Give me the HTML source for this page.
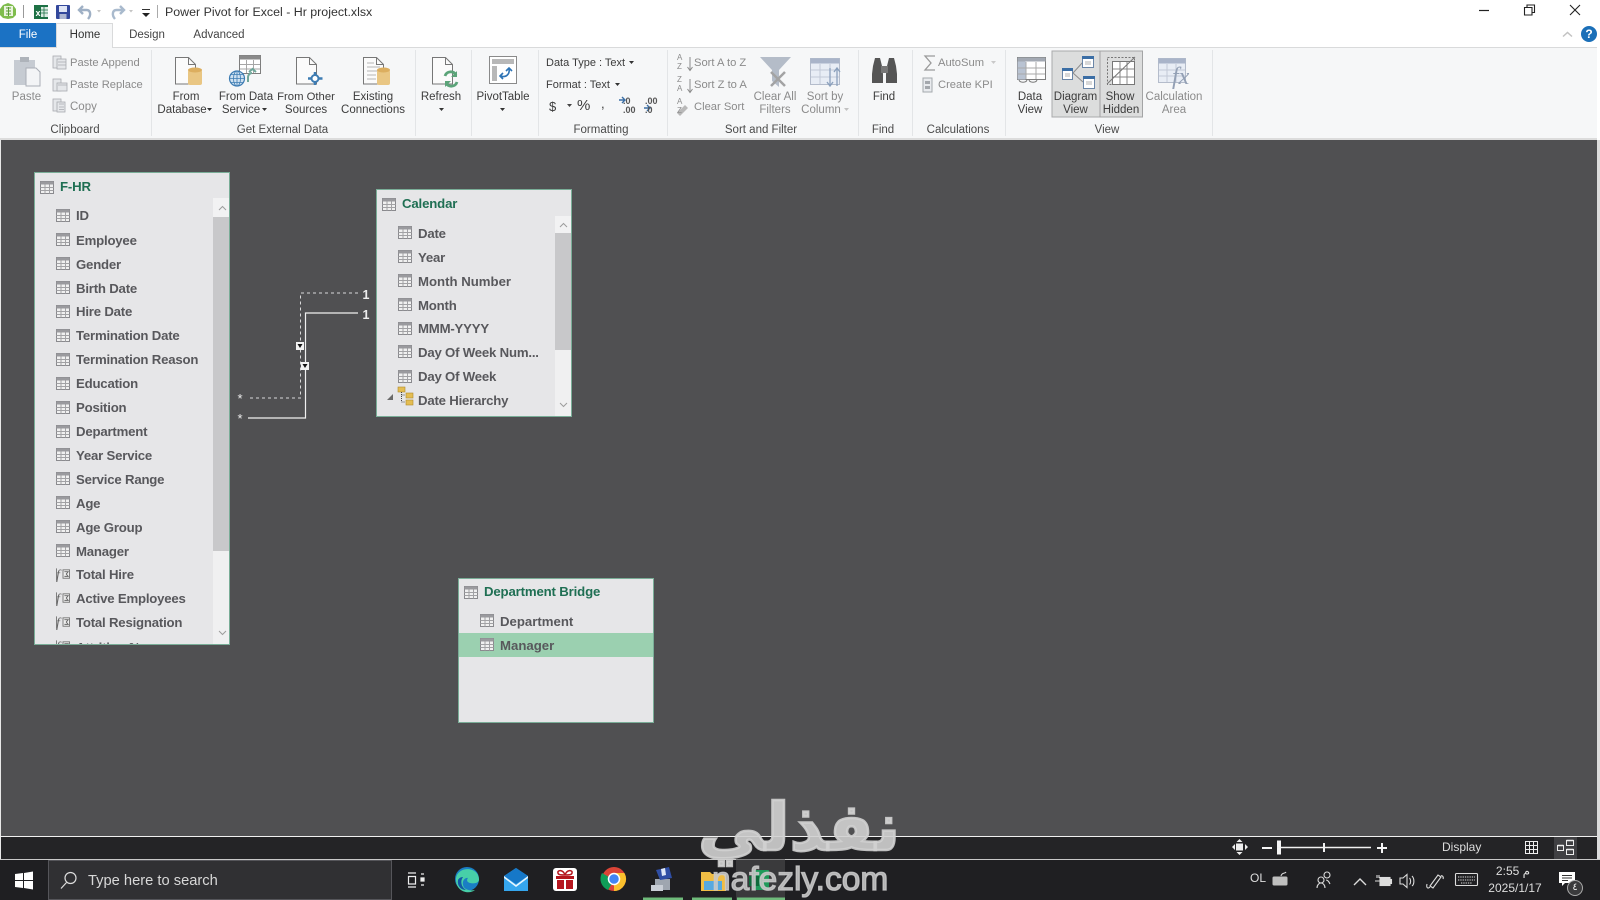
<!DOCTYPE html>
<html lang="en"><head><meta charset="utf-8"><title>Power Pivot for Excel - Hr project.xlsx</title>
<style>
html,body{margin:0;padding:0;width:1600px;height:900px;overflow:hidden;background:#fff}
#w{position:relative;width:1600px;height:900px;overflow:hidden;background:#fff;font-family:"Liberation Sans","DejaVu Sans",sans-serif;filter:blur(.3px)}
.a{position:absolute}
.t{position:absolute;white-space:nowrap;font-size:11.5px;line-height:14px;color:#3c3c3c}
.c{transform:translateX(-50%)}
.d{color:#8b8b8b}
.g{color:#4a4a4a}
.tb{position:absolute;background:#e6e6e8;border:1px solid #79ad97;box-sizing:border-box;overflow:hidden}
.h{position:absolute;font-weight:bold;font-size:13.2px;line-height:16px;color:#1f6f53;letter-spacing:-.15px;white-space:nowrap}
.r{position:absolute;font-weight:bold;font-size:13.2px;line-height:16px;color:#58585c;letter-spacing:-.2px;white-space:nowrap}
.i{position:absolute;width:14px;height:13px}
svg{position:absolute;left:0;top:0;overflow:visible}
</style></head><body><div id="w">

<svg width="0" height="0" style="position:absolute"><defs>
<symbol id="gr" viewBox="0 0 14 13"><rect x=".5" y=".5" width="13" height="12" fill="#f0f0f0" stroke="#8a8a8e"/><rect x=".5" y=".5" width="13" height="3" fill="#9a9a9e"/><path d="M.5 6.5h13M.5 9.5h13M5 3.5v9M9.5 3.5v9" stroke="#a2a2a5" fill="none"/></symbol>
<symbol id="fx" viewBox="0 0 15 13" overflow="visible"><text x="0" y="11.500" font-family="Liberation Serif" font-style="italic" font-size="15" fill="#666">f</text><path d="M.5 0v13" stroke="#777"/><rect x="7.500" y="1.500" width="7" height="9" fill="#eee" stroke="#777"/><path d="M9 3.500h4l-2 2.500 2 2.500H9" stroke="#666" fill="none"/></symbol>
</defs></svg>

<!-- title bar -->
<svg width="1600" height="50">
<path d="M8 3l5 2 3 4v6l-3 3-5 1-5-1-3-3V9l3-4z" fill="#7fbd4d"/><path d="M4 6h9v10H4z" fill="#e9f3dd"/><path d="M6 8h5M6 11h5M6 14h5M8.5 7v9" stroke="#5b9b35"/>
<path d="M23.500 5v13" stroke="#999"/>
<rect x="34" y="5" width="14" height="14" fill="#1e7145"/><rect x="41" y="7" width="7" height="10" fill="#dcebe2"/><text x="35.500" y="16" font-size="9" font-weight="bold" fill="#fff" font-family="Liberation Sans">x</text><path d="M44 7v10M41 10h7M41 13h7" stroke="#1e7145" stroke-width=".8"/>
<rect x="56" y="5" width="14" height="14" rx="1" fill="#33489c"/><rect x="59" y="6" width="8" height="6" fill="#dfe5f5"/><rect x="59.500" y="14" width="7" height="5" fill="#adb6d2"/>
<path d="M83 6l-4 4 4 4M79.500 10h7c4 0 5 5 1.500 9" fill="none" stroke="#9fb0c5" stroke-width="2.400"/><path d="M97 10l4 0-2 2.500z" fill="#c4c4c4"/>
<path d="M120 6l4 4-4 4M123.500 10h-7c-4 0-5 5-1.500 9" fill="none" stroke="#a9bacd" stroke-width="2.400"/><path d="M129 10l4 0-2 2.500z" fill="#c4c4c4"/>
<path d="M142 9.500h8" stroke="#333"/><path d="M142 13l8 0-4 4z" fill="#222"/>
<path d="M157.500 5v13" stroke="#aaa"/>
<path d="M1479 10.500h10" stroke="#222" stroke-width="1.200"/>
<path d="M1527 7.500v-2.500h7.500v7.500h-2.500M1524.500 7.500h7.500v7.500h-7.500z" fill="none" stroke="#222" stroke-width="1.100"/>
<path d="M1570 5l10 10M1580 5l-10 10" stroke="#222" stroke-width="1.100"/>
<path d="M1563 36.500l4.500-4 4.500 4" fill="none" stroke="#c2c2c2" stroke-width="1.500"/>
<circle cx="1589" cy="34" r="8" fill="#1a6fb8"/>
</svg>
<div class="t" style="left:165px;top:5px;font-size:12.400px;color:#333;">Power Pivot for Excel - Hr project.xlsx</div>
<div class="t c" style="left:1589px;top:27px;font-size:12px;font-weight:bold;color:#fff">?</div>

<!-- tabs -->
<div class="a" style="left:0;top:23px;width:56px;height:24px;background:#1b72c4"></div>
<div class="t c" style="left:28px;top:28px;color:#fff">File</div>
<div class="a" style="left:0;top:46.500px;width:1597px;height:1px;background:#d9dadb"></div>
<div class="a" style="left:56px;top:23px;width:57px;height:25px;background:#f6f7f8;border:1px solid #d9dadb;border-bottom:0;box-sizing:border-box"></div>
<div class="t c" style="left:85px;top:28px;color:#333">Home</div>
<div class="t c" style="left:147px;top:28px;color:#444">Design</div>
<div class="t c" style="left:219px;top:28px;color:#444">Advanced</div>

<!-- ribbon -->
<div class="a" style="left:0;top:47.500px;width:1597px;height:90px;background:#f6f7f8"></div>
<div class="a" style="left:0;top:137.500px;width:1597px;height:2.500px;background:#dcdcdc"></div>
<svg width="1600" height="140">
<g stroke="#e3e5e7" stroke-width="1">
<path d="M151.500 50v86M415.500 50v86M471.500 50v86M538.500 50v86M667.500 50v86M858.500 50v86M912.500 50v86M1005.500 50v86M1212.500 50v86"/>
</g>
<rect x="1052" y="51" width="48" height="66" fill="#dcdddd" stroke="#a9aaab"/>
<rect x="1100" y="51" width="42.500" height="66" fill="#dcdddd" stroke="#a3a4a5"/>

<!-- paste -->
<rect x="14" y="60" width="21" height="25" fill="#c6cbd2"/><rect x="20" y="57" width="9" height="5" fill="#aeb3ba"/><path d="M26 68h10l4 4v14H26z" fill="#f3f4f6" stroke="#a9aeb6"/>
<g fill="#e5e7ea" stroke="#a8abb0" stroke-width=".8">
<rect x="53" y="56" width="8" height="12"/><rect x="57" y="59" width="9" height="10"/><rect x="53" y="79" width="8" height="12"/><rect x="57" y="83" width="10" height="8"/><rect x="53" y="99" width="8" height="12"/><rect x="57" y="102" width="8" height="10"/></g>
<path d="M58 62h8M58 65h8M58 85h9M59 104h5M59 107h5M59 109.500h5" stroke="#a8abb0" stroke-width=".8"/>

<!-- docs -->
<g fill="#fbfbfb" stroke="#777" stroke-width="1">
<path d="M175.500 57.500h13l7 7v19.500h-20z"/>
<path d="M296.500 57.500h13l7 7v19.500h-20z"/>
<path d="M363.500 57.500h13l7 7v19.500h-20z"/>
<path d="M432.500 57.500h13l7 7v19.500h-20z"/>
</g>
<path d="M188.500 57.500v7h7M309.500 57.500v7h7M376.500 57.500v7h7M445.500 57.500v7h7" fill="none" stroke="#777"/>
<path d="M367 63h7M367 67h13M367 71h13M367 75h9M367 79h9" stroke="#b5b5b5"/>
<g fill="#e9c683"><rect x="188" y="70" width="14" height="15" rx="2"/><rect x="377" y="70" width="13" height="15" rx="2"/></g>
<g fill="#dcae5f"><ellipse cx="195" cy="70" rx="7" ry="2.500"/><ellipse cx="383.500" cy="70" rx="6.500" ry="2.500"/></g>
<!-- data service -->
<rect x="239.500" y="55.500" width="21" height="18" fill="#fff" stroke="#7e7e7e"/><rect x="239.500" y="55.500" width="21" height="4" fill="#8a8a8a"/>
<path d="M246.500 60v13M253.500 60v13M240 64.500h20M240 69h20" stroke="#a6a6a6"/>
<circle cx="237" cy="78.500" r="7.500" fill="#cfe1f0" stroke="#3d7cb3" stroke-width="1.200"/><path d="M229.500 78.500h15M237 71v15M231 74.500h12M231 82.500h12" stroke="#3d7cb3" stroke-width=".8"/><ellipse cx="237" cy="78.500" rx="3.500" ry="7.500" fill="none" stroke="#3d7cb3" stroke-width=".8"/>
<path d="M248 82v-5c0-2 2-4 4-4M249 72l3.500-3 3.500 3" fill="none" stroke="#6fa79a" stroke-width="2"/>
<!-- other sources -->
<circle cx="315" cy="78.500" r="3.500" fill="#fff" stroke="#3d7cb3" stroke-width="2"/><path d="M315 72v3M315 82v3M308 78.500h3.500M319 78.500h3.500" stroke="#3d7cb3" stroke-width="2.500"/>
<!-- refresh -->
<path d="M445 76a6 6 0 0 1 11-1M457 82a6 6 0 0 1-11 1" fill="none" stroke="#5ba479" stroke-width="2.800"/><path d="M457 71v6h-6zM445 87v-6h6z" fill="#5ba479"/>
<!-- pivot -->
<rect x="489.500" y="56.500" width="27" height="27" fill="#fff" stroke="#8a8a8a"/><rect x="492" y="59" width="22" height="5" fill="#b8b8b8"/><rect x="492" y="66" width="5" height="15" fill="#b8b8b8"/>
<path d="M501 76c5 2 9-2 8-7M506 71l3-3 3 3M503 73l-3 3 3 3" fill="none" stroke="#2d73b5" stroke-width="1.600"/>
<!-- format small icons -->
<path d="M567 104l5 0-2.500 3z" fill="#444"/>
<path d="M619 100h5M622 97l3 3-3 3M644 108h5M647 105l3 3-3 3" fill="none" stroke="#3a6ea5" stroke-width="1.400"/>
<!-- sort -->
<path d="M690 57v13M687.500 67l2.500 3.500 2.500-3.500M690 79v13M687.500 89l2.500 3.500 2.500-3.500" fill="none" stroke="#8b8b8b"/>
<path d="M677 113l8-8 3 3-8 8z" fill="#b9b9b9"/>
<!-- clear -->
<path d="M760 57h31l-12 13v17l-7-6V70z" fill="#b4bcc8"/><path d="M771 72l14 14M785 72l-14 14" stroke="#a3a3a3" stroke-width="2.500"/>
<!-- sort by column -->
<rect x="810.500" y="58.500" width="29" height="26" fill="#e8edf5" stroke="#b4bccb"/><rect x="810.500" y="58.500" width="29" height="5" fill="#a9b4c9"/><path d="M820 64v20M830 64v20M811 70h28M811 77h28" stroke="#c2c9d7"/>
<path d="M830 68v18M827 82l3 4 3-4M837 86v-18M834 72l3-4 3 4" fill="none" stroke="#8ba0bc" stroke-width="1.300"/>
<!-- find binoc -->
<path d="M873 66l2-8h5l2 8 1 8v9h-11v-9zM896 66l-2-8h-5l-2 8-1 8v9h11v-9z" fill="#555"/><rect x="881" y="66" width="7" height="7" fill="#777"/>
<!-- sum -->
<path d="M935 56h-10l6 7-6 7h10" fill="none" stroke="#9a9a9a" stroke-width="1.300"/>
<path d="M991 61l5 0-2.500 3z" fill="#c9c9c9"/>
<rect x="923" y="78" width="9" height="14" fill="#e9ebee" stroke="#a4a8ad"/><rect x="925" y="81" width="5" height="3" fill="#a4a8ad"/><rect x="925" y="86" width="5" height="3" fill="#a4a8ad"/>
<!-- data view -->
<rect x="1017.500" y="57.500" width="28" height="22" fill="#fff" stroke="#7e7e7e"/><rect x="1017.500" y="57.500" width="28" height="4" fill="#a3a9b3"/><rect x="1017.500" y="61.500" width="8" height="18" fill="#b9c3d2"/>
<path d="M1026 62v17M1036 62v17M1018 68h27M1018 74h27" stroke="#a9a9a9"/>
<path d="M1019 80c1 3 7 3 8 0M1029 80c1 3 7 3 8 0" stroke="#777" fill="none"/>
<!-- diagram view -->
<path d="M1073 73l10-11M1073 73l10 9" stroke="#8d8d8d" fill="none"/>
<g fill="#fff" stroke="#6b86a7"><rect x="1062.500" y="68.500" width="10" height="11"/><rect x="1082.500" y="56.500" width="11" height="11"/><rect x="1083.500" y="76.500" width="11" height="12"/></g>
<g fill="#3b6ea5"><rect x="1062" y="68" width="11" height="3"/><rect x="1082" y="56" width="12" height="3"/><rect x="1083" y="76" width="12" height="3"/></g>
<path d="M1065 74h5M1065 76h5M1085 62h6M1085 64h6M1086 82h6M1086 84h6" stroke="#999" stroke-width=".8"/>
<!-- show hidden -->
<rect x="1107.500" y="57.500" width="27" height="27" fill="none" stroke="#777" stroke-dasharray="2 1.500"/>
<rect x="1112.500" y="61.500" width="22" height="23" fill="#fff" stroke="#777"/>
<path d="M1120 62v22M1127 62v22M1113 69h21M1113 77h21" stroke="#888"/>
<path d="M1107 84l28-27" stroke="#777"/>
<!-- calc -->
<rect x="1158.500" y="58.500" width="27" height="24" fill="#e8edf5" stroke="#b4bccb"/><rect x="1158.500" y="58.500" width="27" height="5" fill="#a9b4c9"/><path d="M1167 64v18M1176 64v18M1159 70h26M1159 76h26" stroke="#c2c9d7"/>
<text x="1172" y="84" font-family="Liberation Serif" font-style="italic" font-size="24" fill="#93a0b5">fx</text>
<!-- dropdown triangles -->
<g fill="#333">
<path d="M207 108l5 0-2.500 3zM262 108l5 0-2.500 3zM439 108l5 0-2.500 3zM500 108l5 0-2.500 3zM629 61l5 0-2.500 3zM615 83l5 0-2.500 3z"/>
</g>
<path d="M844 108l5 0-2.500 3z" fill="#c2c2c2"/>
</svg>
<div class="a" style="left:0;top:1px;width:1600px;height:0">
<div class="t d c" style="left:26.500px;top:89px">Paste</div>
<div class="t d" style="left:70px;top:55px;font-size:11.200px">Paste Append</div>
<div class="t d" style="left:70px;top:77px;font-size:11.200px">Paste Replace</div>
<div class="t d" style="left:70px;top:99px">Copy</div>
<div class="t g c" style="left:75px;top:122px">Clipboard</div>
<div class="t c" style="left:186px;top:89px">From</div><div class="t c" style="left:182px;top:102px">Database</div>
<div class="t c" style="left:246px;top:89px">From Data</div><div class="t c" style="left:241px;top:102px">Service</div>
<div class="t c" style="left:306px;top:89px;font-size:11.300px">From Other</div><div class="t c" style="left:306px;top:102px">Sources</div>
<div class="t c" style="left:373px;top:89px">Existing</div><div class="t c" style="left:373px;top:102px">Connections</div>
<div class="t g c" style="left:282.500px;top:122px">Get External Data</div>
<div class="t c" style="left:441px;top:89px">Refresh</div>
<div class="t c" style="left:503px;top:89px">PivotTable</div>
<div class="t" style="left:546px;top:55px;font-size:11px">Data Type : Text</div>
<div class="t" style="left:546px;top:77px;font-size:11px">Format : Text</div>
<div class="t" style="left:549px;top:99px;font-size:13px">$</div>
<div class="t" style="left:577px;top:98px;font-size:15px">%</div>
<div class="t" style="left:601px;top:96px;font-size:13px">,</div>
<div class="t" style="left:623px;top:96px;font-size:9px;font-weight:bold;line-height:9px;color:#555">.0<br>.00</div>
<div class="t" style="left:645px;top:96px;font-size:9px;font-weight:bold;line-height:9px;color:#555">.00<br>.0</div>
<div class="t g c" style="left:601px;top:122px">Formatting</div>
<div class="t d" style="left:677px;top:52px;font-size:8px;line-height:9px">A<br>Z</div>
<div class="t d" style="left:677px;top:74px;font-size:8px;line-height:9px">Z<br>A</div>
<div class="t d" style="left:677px;top:96px;font-size:8px;line-height:9px">A<br>Z</div>
<div class="t d" style="left:694px;top:55px;font-size:11.200px">Sort A to Z</div>
<div class="t d" style="left:694px;top:77px;font-size:11.200px">Sort Z to A</div>
<div class="t d" style="left:694px;top:99px;font-size:11.200px">Clear Sort</div>
<div class="t d c" style="left:775px;top:89px">Clear All</div><div class="t d c" style="left:775px;top:102px">Filters</div>
<div class="t d c" style="left:825px;top:89px">Sort by</div><div class="t d c" style="left:821px;top:102px">Column</div>
<div class="t g c" style="left:761px;top:122px">Sort and Filter</div>
<div class="t c" style="left:884px;top:89px">Find</div>
<div class="t g c" style="left:883px;top:122px">Find</div>
<div class="t d" style="left:938px;top:55px;font-size:11.200px">AutoSum</div>
<div class="t d" style="left:938px;top:77px;font-size:11.200px">Create KPI</div>
<div class="t g c" style="left:958px;top:122px">Calculations</div>
<div class="t c" style="left:1030px;top:89px">Data</div><div class="t c" style="left:1030px;top:102px">View</div>
<div class="t c" style="left:1075.500px;top:89px">Diagram</div><div class="t c" style="left:1075.500px;top:102px">View</div>
<div class="t c" style="left:1120px;top:89px">Show</div><div class="t c" style="left:1121px;top:102px">Hidden</div>
<div class="t d c" style="left:1174px;top:89px">Calculation</div><div class="t d c" style="left:1174px;top:102px">Area</div>
<div class="t g c" style="left:1107px;top:122px">View</div>
</div>

<!-- canvas -->
<div class="a" style="left:0;top:140px;width:1597px;height:696px;background:#505052;border-left:1px solid #e8e8e8;box-sizing:border-box"></div>
<div class="a" style="left:1597px;top:140px;width:3px;height:720px;background:#dcdcdc"></div>

<!-- F-HR -->
<div class="tb" style="left:34px;top:172px;width:196px;height:473px">
<svg class="i" style="left:5px;top:7.500px;width:14px;height:13px"><use href="#gr"/></svg>
<div class="h" style="left:25px;top:6px">F-HR</div>
<div class="a" style="left:178px;top:25px;width:17px;height:19px;background:#f2f2f3"></div>
<div class="a" style="left:178px;top:44px;width:17px;height:334px;background:#c8c8ca"></div>
<div class="a" style="left:178px;top:378px;width:17px;height:95px;background:#f0f0f1"></div>
<svg><path d="M184 37l3.500-3.500 3.500 3.500M184 458l3.500 3.500 3.500-3.500" fill="none" stroke="#9d9d9d"/></svg>
<svg class="i" style="left:21px;top:36px;"><use href="#gr"/></svg><div class="r" style="left:41px;top:35px">ID</div>
<svg class="i" style="left:21px;top:60px;"><use href="#gr"/></svg><div class="r" style="left:41px;top:59.500px">Employee</div>
<svg class="i" style="left:21px;top:84px;"><use href="#gr"/></svg><div class="r" style="left:41px;top:83.500px">Gender</div>
<svg class="i" style="left:21px;top:108px;"><use href="#gr"/></svg><div class="r" style="left:41px;top:107.500px">Birth Date</div>
<svg class="i" style="left:21px;top:131.500px;"><use href="#gr"/></svg><div class="r" style="left:41px;top:130.500px">Hire Date</div>
<svg class="i" style="left:21px;top:155.500px;"><use href="#gr"/></svg><div class="r" style="left:41px;top:154.500px">Termination Date</div>
<svg class="i" style="left:21px;top:179.500px;"><use href="#gr"/></svg><div class="r" style="left:41px;top:178.500px">Termination Reason</div>
<svg class="i" style="left:21px;top:203.500px;"><use href="#gr"/></svg><div class="r" style="left:41px;top:202.500px">Education</div>
<svg class="i" style="left:21px;top:227.500px;"><use href="#gr"/></svg><div class="r" style="left:41px;top:226.500px">Position</div>
<svg class="i" style="left:21px;top:251.500px;"><use href="#gr"/></svg><div class="r" style="left:41px;top:250.500px">Department</div>
<svg class="i" style="left:21px;top:275px;"><use href="#gr"/></svg><div class="r" style="left:41px;top:274.500px">Year Service</div>
<svg class="i" style="left:21px;top:299px;"><use href="#gr"/></svg><div class="r" style="left:41px;top:298.500px">Service Range</div>
<svg class="i" style="left:21px;top:323px;"><use href="#gr"/></svg><div class="r" style="left:41px;top:322.500px">Age</div>
<svg class="i" style="left:21px;top:347px;"><use href="#gr"/></svg><div class="r" style="left:41px;top:346.500px">Age Group</div>
<svg class="i" style="left:21px;top:371px;"><use href="#gr"/></svg><div class="r" style="left:41px;top:370.500px">Manager</div>
<svg class="i" style="left:21px;top:394.500px;"><use href="#fx"/></svg><div class="r" style="left:41px;top:393.500px">Total Hire</div>
<svg class="i" style="left:21px;top:418.500px;"><use href="#fx"/></svg><div class="r" style="left:41px;top:417.500px">Active Employees</div>
<svg class="i" style="left:21px;top:442.500px;"><use href="#fx"/></svg><div class="r" style="left:41px;top:441.500px">Total Resignation</div>
<svg class="i" style="left:21px;top:467px;"><use href="#fx"/></svg><div class="r" style="left:41px;top:467px">Attrition %</div>
</div>

<!-- Calendar -->
<div class="tb" style="left:376px;top:189px;width:196px;height:228px">
<svg class="i" style="left:5px;top:7.500px"><use href="#gr"/></svg>
<div class="h" style="left:25px;top:6px">Calendar</div>
<div class="a" style="left:178px;top:26px;width:17px;height:17px;background:#f2f2f3"></div>
<div class="a" style="left:178px;top:43px;width:17px;height:117px;background:#c8c8ca"></div>
<div class="a" style="left:178px;top:160px;width:17px;height:68px;background:#f0f0f1"></div>
<svg><path d="M183 37l3.500-3.500 3.500 3.500M183 213l3.500 3.500 3.500-3.500" fill="none" stroke="#9d9d9d"/></svg>
<svg class="i" style="left:21px;top:36px"><use href="#gr"/></svg><div class="r" style="left:41px;top:35.500px">Date</div>
<svg class="i" style="left:21px;top:60px"><use href="#gr"/></svg><div class="r" style="left:41px;top:59.500px">Year</div>
<svg class="i" style="left:21px;top:84px"><use href="#gr"/></svg><div class="r" style="left:41px;top:83.500px;letter-spacing:0">Month Number</div>
<svg class="i" style="left:21px;top:108px"><use href="#gr"/></svg><div class="r" style="left:41px;top:107.500px">Month</div>
<svg class="i" style="left:21px;top:131.500px"><use href="#gr"/></svg><div class="r" style="left:41px;top:130.500px">MMM-YYYY</div>
<svg class="i" style="left:21px;top:155px"><use href="#gr"/></svg><div class="r" style="left:41px;top:154.500px">Day Of Week Num...</div>
<svg class="i" style="left:21px;top:179.500px"><use href="#gr"/></svg><div class="r" style="left:41px;top:178.500px">Day Of Week</div>
<svg style="left:0;top:0"><path d="M10 210l6 0v-6z" fill="#6a6a6a"/>
<g fill="#e4bd52" stroke="#b08a2b" stroke-width=".6"><rect x="21" y="197" width="7" height="5"/><rect x="29" y="203" width="7" height="5"/><rect x="29" y="210" width="7" height="5"/></g><path d="M24.500 202v10h4M24.500 205h4" fill="none" stroke="#444" stroke-dasharray="1 1"/></svg>
<div class="r" style="left:41px;top:202.500px">Date Hierarchy</div>
</div>

<!-- Department Bridge -->
<div class="tb" style="left:458px;top:578px;width:196px;height:145px">
<svg class="i" style="left:5px;top:6.500px"><use href="#gr"/></svg>
<div class="h" style="left:25px;top:5px">Department Bridge</div>
<div class="a" style="left:0;top:54px;width:196px;height:24px;background:#9bd0b0"></div>
<svg class="i" style="left:21px;top:35px"><use href="#gr"/></svg><div class="r" style="left:41px;top:34.500px;letter-spacing:0">Department</div>
<svg class="i" style="left:21px;top:59px"><use href="#gr"/></svg><div class="r" style="left:41px;top:58.500px;letter-spacing:0">Manager</div>
</div>

<!-- connectors -->
<svg width="1600" height="900">
<path d="M358 293H300.500V398H248" fill="none" stroke="#d9d9d9" stroke-width="1" stroke-dasharray="3 3"/>
<path d="M358 313H305.500V418H248" fill="none" stroke="#f0f0f0" stroke-width="1.200"/>
<rect x="296" y="342" width="8" height="8" fill="#f2f2f2"/><path d="M297.500 344h5l-2.500 4z" fill="#111"/>
<rect x="301" y="362" width="8" height="8" fill="#f2f2f2"/><path d="M302.500 364h5l-2.500 4z" fill="#111"/>
</svg>
<div class="t c" style="left:366px;top:288px;color:#eee;font-size:12.500px;font-weight:bold">1</div>
<div class="t c" style="left:366px;top:308px;color:#eee;font-size:12.500px;font-weight:bold">1</div>
<div class="t c" style="left:240px;top:392px;color:#eee;font-size:13px">*</div>
<div class="t c" style="left:240px;top:412px;color:#eee;font-size:13px">*</div>

<!-- status bar -->
<div class="a" style="left:0;top:835.500px;width:1597px;height:24px;background:#242426;border-left:1px solid #e8e8e8;box-sizing:border-box"></div>
<div class="a" style="left:0;top:835.500px;width:1597px;height:1.500px;background:#f0f0f0"></div>
<div class="a" style="left:1554px;top:837px;width:23px;height:22px;background:#404043"></div>
<div class="a" style="left:0;top:858.500px;width:1600px;height:1px;background:#c8c8c8"></div>
<svg width="1600" height="900">
<rect x="1236" y="843.500" width="7" height="7" fill="#eee"/><path d="M1232 847l3-3v6zM1248 847l-3-3v6zM1239.500 839l3 3h-6zM1239.500 855l3-3h-6z" fill="#eee"/>
<path d="M1262 848h10" stroke="#f5f5f5" stroke-width="2"/>
<rect x="1277" y="840.500" width="4" height="14" fill="#f5f5f5"/>
<path d="M1277 847.500h94" stroke="#f0f0f0" stroke-width="1.500"/>
<rect x="1323" y="843" width="2" height="9" fill="#f0f0f0"/>
<path d="M1377 848h10M1382 843v10" stroke="#f5f5f5" stroke-width="2"/>
<rect x="1525.500" y="841.500" width="12" height="12" fill="none" stroke="#eee"/><path d="M1529.500 842v11M1533.500 842v11M1526 845.500h11M1526 849.500h11" stroke="#eee"/>
<g fill="none" stroke="#eee"><rect x="1557.500" y="845.500" width="6" height="5"/><rect x="1566.500" y="840.500" width="7" height="5"/><rect x="1566.500" y="849.500" width="7" height="5"/></g>
<path d="M1557.500 845.500h6M1566.500 840.500h7M1566.500 849.500h7" stroke="#eee" stroke-width="1.500"/>
</svg>
<div class="t" style="left:1442px;top:839.500px;color:#ddd;font-size:12px">Display</div>

<!-- taskbar -->
<div class="a" style="left:0;top:859.500px;width:1600px;height:40.500px;background:#1f1f22"></div>
<div class="a" style="left:48px;top:859.500px;width:344px;height:40.500px;background:#303033;border:1px solid #55555a;box-sizing:border-box"></div>
<div class="t" style="left:88px;top:873px;color:#d8d8d8;font-size:14.700px;line-height:16px">Type here to search</div>
<svg width="1600" height="900">
<path d="M15 874l8-1v7h-8zM24 873l9-1.500V880h-9zM15 881h8v7l-8-1zM24 881h9v8.500l-9-1.500z" fill="#fff"/>
<circle cx="70.500" cy="878" r="5.500" fill="none" stroke="#ddd" stroke-width="1.200"/><path d="M66.500 882.500l-5.500 6" stroke="#ddd" stroke-width="1.200"/>
<path d="M408 873h8M408 887h8M408.500 876.500h7v7.500h-7zM421 874h3M421 878h3v3h-3zM421 885h3" fill="none" stroke="#eee" stroke-width="1.200"/><rect x="421" y="877.500" width="3" height="3" fill="#eee"/>
<!-- edge -->
<circle cx="467" cy="879" r="12" fill="#1a7ec4"/><path d="M456 878c2-12 22-12 23 1 .5 4-5 5-9 4-4-1-3-4-2-5-3-1-6 3-5 7 1 5 7 6 12 5-6 5-20 2-19-12z" fill="#47cfa8"/><path d="M458 880c-1 6 3 10 8 10-5-3-6-9-3-13-2 0-4 1-5 3z" fill="#1357a5"/>
<!-- mail -->
<path d="M504 876l12-8 12 8v15h-24z" fill="#35a6ee"/><path d="M504 876l12-8 12 8-12 8z" fill="#1678c8"/><path d="M504 876l12 9 12-9v2l-12 9-12-9z" fill="#e8f6ff"/>
<!-- gift -->
<rect x="553" y="868" width="24" height="23" rx="3" fill="#fff"/><rect x="556" y="876" width="18" height="3" fill="#b5161e"/><rect x="557" y="880" width="7" height="9" fill="#b5161e"/><rect x="566" y="880" width="7" height="9" fill="#b5161e"/>
<path d="M565 875c-2-6-8-5-7-2 0 2 4 2 7 2zM565 875c2-6 8-5 7-2 0 2-4 2-7 2z" fill="none" stroke="#b5161e" stroke-width="1.500"/>
<!-- chrome -->
<circle cx="614" cy="879" r="12" fill="#db4437"/><path d="M614 879L602 879A12 12 0 0 0 608 889.500z" fill="#0f9d58"/><path d="M602 873a12 12 0 0 0 6 17l6-10z" fill="#0f9d58"/><path d="M614 891a12 12 0 0 0 10.400-18H614z" fill="#fbc02d"/><circle cx="614" cy="879" r="5.500" fill="#4285f4" stroke="#fff" stroke-width="1.500"/>
<!-- app -->
<rect x="655" y="879" width="15" height="11" fill="#9fa6b0"/><path d="M656 870l13-3 3 11-12 2z" fill="#2f4ea5"/><rect x="651" y="885" width="12" height="6" fill="#c9ced6"/><path d="M661 869l4-1 1 7-4 1z" fill="#dfe7f7"/>
<!-- folder -->
<path d="M701 872h9l2 2h14v17h-25z" fill="#f0bd45"/><rect x="704" y="881" width="18" height="9" fill="#57a9e0"/>
<!-- excel -->
<rect x="736" y="859.500" width="49" height="40.500" fill="#3a3a3c"/>
<rect x="752" y="870" width="17" height="20" rx="1" fill="#1f9a5a"/><rect x="749" y="876" width="10" height="10" fill="#0f6a3a"/>
<!-- underlines -->
<rect x="643" y="897.500" width="40" height="2.500" fill="#6fbb7b"/><rect x="692" y="897.500" width="40" height="2.500" fill="#6fbb7b"/><rect x="737" y="897.500" width="48" height="2.500" fill="#6fbb7b"/>
<!-- tray -->
<g fill="none" stroke="#dcdcdc" stroke-width="1.100">
<rect x="1272.500" y="876.500" width="15" height="9" rx="1.500" fill="#bfbfbf" stroke="none"/><path d="M1281 876c1-4 4-2 5-4"/>
<circle cx="1327" cy="875" r="3"/><circle cx="1321" cy="880" r="3"/><path d="M1317 888c0-3 2-5 4-5s4 2 4 5M1326 880c2 0 3 2 4 4"/>
<path d="M1354 885l6-6 6 6" stroke-width="1.400"/>
<rect x="1380" y="877.500" width="10" height="8" fill="#dcdcdc"/><rect x="1390" y="879.500" width="1.500" height="4" fill="#dcdcdc"/><path d="M1375 881h5M1377 875v3M1379 875v3"/>
<path d="M1400 878h3l4-3.500v13l-4-3.500h-3zM1409.500 878c1.500 1.500 1.500 5 0 6.500M1412 876c2.500 2.500 2.500 8 0 10"/>
<path d="M1430 886l8-11 3 2-8 11zM1427 884c-1 4 1 5 3 3M1441 876c1-1 3 1 2 3"/>
<rect x="1455.500" y="873.500" width="22" height="12" rx="1"/><path d="M1458 877h17M1458 880h17M1461 883h11" stroke-dasharray="1.300 1"/>
</g>
<path d="M1559 872h16v11h-10l-3 3v-3h-3z" fill="#fff"/><path d="M1562 875.500h10M1562 878h10M1562 880.500h6" stroke="#333"/>
<circle cx="1575" cy="888" r="7.500" fill="#3a3a3c" stroke="#aaa"/>
</svg>
<div class="t" style="left:1250px;top:871px;color:#ddd;font-size:12px">OL</div>
<div class="t c" style="left:1513px;top:864px;color:#ddd;font-size:12px;">2:55 م</div>
<div class="t c" style="left:1515px;top:881px;color:#ddd;font-size:12px">2025/1/17</div>
<div class="t c" style="left:1575px;top:881px;color:#eee;font-size:10px">٤</div>

<!-- watermark -->
<div class="a" dir="rtl" style="left:700px;top:783px;width:200px;text-align:center;font:bold 66px/90px 'DejaVu Sans',sans-serif;color:rgba(208,208,208,.9);white-space:nowrap;-webkit-text-stroke:2.500px rgba(208,208,208,.9)">نفذلي</div>
<div class="a" style="left:712px;top:860px;font:33.500px/40px 'Liberation Sans',sans-serif;color:rgba(200,200,200,.88);-webkit-text-stroke:1.300px rgba(200,200,200,.88);white-space:nowrap">nafezly.com</div>
</div></body></html>
